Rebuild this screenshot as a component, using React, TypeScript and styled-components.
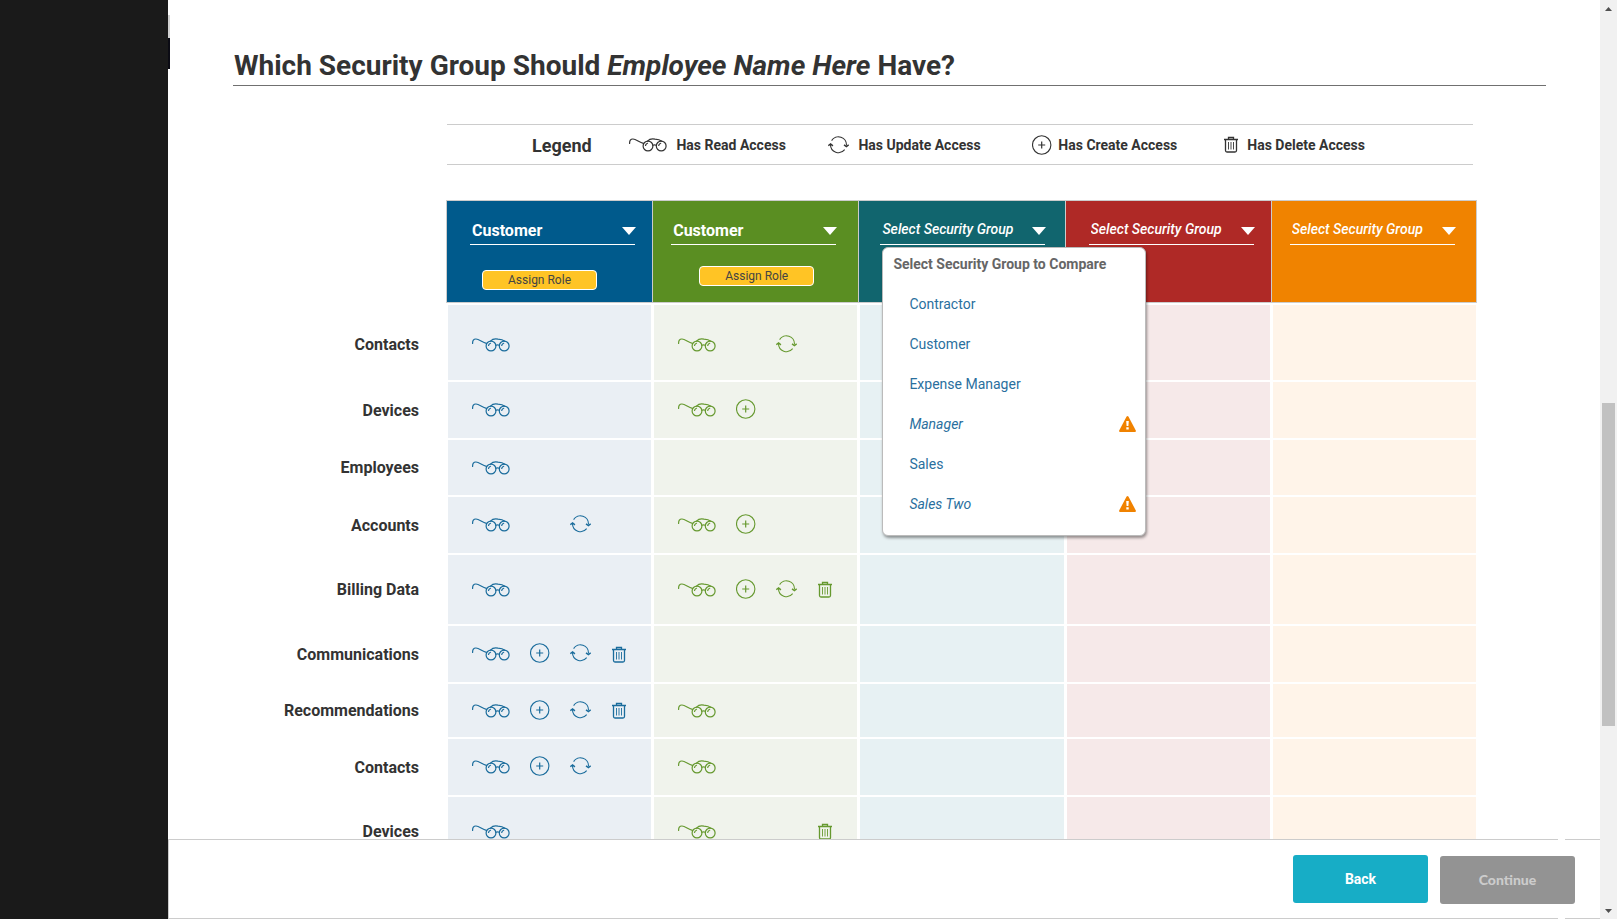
import React from "react";
import styled, { createGlobalStyle, css } from "styled-components";

const GlobalStyle = createGlobalStyle`
  *, *::before, *::after { box-sizing: border-box; }
  html, body { margin: 0; height: 100%; }
  #root { height: 100%; }
  body {
    background: #fff;
    color: #333;
    font-family: Roboto, "Liberation Sans", sans-serif;
    overflow: hidden;
  }
`;

const Shell = styled.div`
  display: flex;
  height: 100vh;
  overflow: hidden;
`;

const Sidebar = styled.nav`
  position: relative;
  flex: 0 0 168px;
  background: #1a1a1a;
`;

const SidebarMarker = styled.span`
  position: absolute;
  left: 100%;
  top: 15px;
  width: 2px;
  height: 54px;
  border-top: 23px solid #d0d0d0;
  background: #0b0b14;
`;

const Page = styled.div`
  flex: 1;
  min-width: 0;
  display: flex;
  flex-direction: column;
`;

const Content = styled.main`
  flex: 1;
  min-height: 0;
  overflow: hidden;
  padding: 44px 54px 0 65px;
`;

const Title = styled.h1`
  margin: 0;
  padding: 1px 0 0 1px;
  height: 42px;
  border-bottom: 1px solid #707070;
  font-size: 28px;
  line-height: 42px;
  font-weight: 700;
  white-space: nowrap;
`;

const Comparison = styled.section`
  padding: 38px 69px 0 0;
`;

const Legend = styled.div`
  display: grid;
  grid-template-columns: 98fr 200fr 205fr 193fr 138fr;
  align-items: center;
  height: 41px;
  margin: 0 4px 35px 214px;
  padding: 0 108px 0 85px;
  border: solid #ccc;
  border-width: 1px 0;
`;

const LegendTitle = styled.h2`
  margin: 0;
  padding-top: 2px;
  font-size: 18px;
  line-height: 24px;
  font-weight: 700;
`;

const LegendItem = styled.div<{ $tight: boolean }>`
  display: flex;
  align-items: center;
  gap: ${(p) => (p.$tight ? 6 : 9)}px;
  font-size: 14px;
  line-height: 20px;
  font-weight: 700;
  white-space: nowrap;
`;

const Matrix = styled.table`
  width: 100%;
  table-layout: fixed;
  border-collapse: separate;
  border-spacing: 0;
`;

const LabelColumn = styled.col`
  width: 213px;
`;

const GroupHeader = styled.th<{ $color: string }>`
  height: 103px;
  padding: 0;
  vertical-align: top;
  text-align: left;
  background: ${(p) => p.$color};
  border: 1px solid #ccc;
  border-right-width: 0;
  &:last-child { border-right-width: 1px; }
`;

const HeaderBody = styled.div<{ $inset: number }>`
  position: relative;
  padding: 16px 0 0 ${(p) => p.$inset}px;
`;

const Picker = styled.div`
  display: grid;
  width: 165px;
  align-items: center;
  border-bottom: 1px solid #fff;
  & > * { grid-area: 1 / 1; }
`;

const Select = styled.select<{ $placeholder: boolean }>`
  appearance: none;
  width: 100%;
  height: 27px;
  margin: 0;
  padding: 0 24px 0 2px;
  border: 0;
  background: transparent;
  color: #fff;
  font-family: inherit;
  ${(p) =>
    p.$placeholder
      ? css`font-size: 14px; font-style: italic; font-weight: 500; padding-bottom: 4px;`
      : css`font-size: 16px; font-weight: 700;`}
  option { color: #333; }
`;

const Caret = styled.svg`
  justify-self: end;
  margin-right: -1px;
  pointer-events: none;
  fill: #fff;
`;

const AssignButton = styled.button<{ $raised: boolean }>`
  display: block;
  width: 115px;
  height: 20px;
  margin: ${(p) => (p.$raised ? "21px 0 0 28px" : "25px 0 0 12px")};
  padding: 0;
  border: 1px solid #fff;
  border-radius: 4px;
  background: #ffc425;
  color: #444;
  font-family: inherit;
  font-size: 12px;
  line-height: 18px;
`;

const Menu = styled.div`
  position: absolute;
  z-index: 2;
  top: 46px;
  left: 23px;
  width: 264px;
  padding: 5px 0 11px;
  border: 1px solid #bbb;
  border-radius: 6px;
  background: #fff;
  box-shadow: 1px 2px 3px rgba(0, 0, 0, 0.4);
`;

const MenuTitle = styled.h3`
  margin: 0 0 9px;
  padding-left: 10px;
  color: #666;
  font-size: 14px;
  line-height: 22px;
  font-weight: 700;
`;

const MenuList = styled.ul`
  margin: 0;
  padding: 0;
  list-style: none;
`;

const MenuLink = styled.a<{ $flagged: boolean }>`
  display: flex;
  align-items: center;
  justify-content: space-between;
  height: 40px;
  padding: 0 9px 0 26px;
  color: #2a6f9e;
  font-size: 14px;
  font-weight: 400;
  font-style: ${(p) => (p.$flagged ? "italic" : "normal")};
  text-decoration: none;
`;

const RowLabel = styled.th`
  padding: 0 27px 0 0;
  text-align: right;
  font-size: 16px;
  line-height: 16px;
  font-weight: 700;
`;

const RowLabelText = styled.span`
  display: block;
  padding-top: 3px;
`;

const AccessCell = styled.td<{ $tint: string; $height: number }>`
  height: ${(p) => p.$height + 2}px;
  padding: 0 0 0 24px;
  border: solid #fff;
  border-width: 2px 1px 0 2px;
  background: ${(p) => p.$tint};
`;

const MatrixRow = styled.tr`
  &:first-child > ${RowLabel}, &:first-child > ${AccessCell} { padding-top: 4px; }
`;

const AccessIcons = styled.div<{ $color: string }>`
  display: grid;
  grid-template-columns: 58px 40px 42px 16px;
  align-items: center;
  height: 22px;
  color: ${(p) => p.$color};
`;

const Slot = styled.span<{ $column: number; $raised: boolean }>`
  grid-column: ${(p) => p.$column};
  grid-row: 1;
  display: flex;
  padding-bottom: ${(p) => (p.$raised ? 2 : 0)}px;
`;

const Footer = styled.footer`
  position: relative;
  flex: 0 0 80px;
  display: flex;
  justify-content: flex-end;
  gap: 12px;
  padding: 15px 25px 0 0;
  border: 1px solid #ccc;
  border-right: 0;
  background: #fff;
`;

const FooterGap = styled.span`
  position: absolute;
  top: -1px;
  bottom: -1px;
  right: 35px;
  width: 7px;
  border: solid #fff;
  border-width: 1px 0;
`;

const ActionButton = styled.button<{ $muted?: boolean }>`
  position: relative;
  z-index: 1;
  width: 135px;
  height: 48px;
  padding: 0;
  border: 0;
  border-radius: 3px;
  font-family: Roboto, sans-serif;
  font-size: 14px;
  font-weight: 700;
  background: #17adc6;
  color: #fff;
  ${(p) =>
    p.$muted &&
    css`
      margin-top: 1px;
      padding-bottom: 2px;
      background: #939393;
      color: #ccc;
      font-family: Lato, sans-serif;
      font-weight: 900;
    `}
`;

const ScrollTrack = styled.div`
  flex: 0 0 17px;
  display: grid;
  grid-template-rows: 17px 386fr 323fr 176fr 17px;
  justify-items: center;
  align-items: center;
  background: #f1f1f1;
`;

const ScrollThumb = styled.div`
  grid-row: 3;
  width: 13px;
  height: 100%;
  background: #c1c1c1;
`;

const ScrollArrow = styled.svg<{ $row: number }>`
  grid-row: ${(p) => p.$row};
  fill: #505050;
`;

type Access = "read" | "create" | "update" | "delete";

function GlassesIcon() {
  return (
    <svg width="38" height="14" viewBox="0 0 38 14" fill="none" stroke="currentColor" strokeWidth="1.200" strokeLinecap="round" aria-hidden="true">
      <path d="M.6 5.500C.5 2.600 1.600.9 4 1c3 .1 6 3.100 10.400 4.400" />
      <circle cx="19" cy="8" r="4.900" />
      <circle cx="32.200" cy="8" r="4.900" />
      <path d="M23.900 7.300q1.700-.9 3.400 0M18.500 3.100C20.500 1 23.500.7 26 1.200c2.500.1 5 .6 6.800 2M16.500 7.500q.4-1.700 2-2.200M29.700 7.500q.4-1.700 2-2.200" />
    </svg>
  );
}

function CreateIcon() {
  return (
    <svg width="20" height="20" viewBox="0 0 20 20" fill="none" stroke="currentColor" aria-hidden="true">
      <circle cx="9.700" cy="10" r="9.200" strokeWidth="1.100" />
      <path d="M9.700 6.500v7M6.200 10h7" strokeWidth="1.200" />
    </svg>
  );
}

function UpdateIcon() {
  return (
    <svg width="21" height="18" viewBox="0 0 21 18" fill="none" stroke="currentColor" aria-hidden="true">
      <path d="M3.600 4.600A8 8 0 0 1 18.400 9.500M16.700 13.700A8 8 0 0 1 2.500 8.500" strokeWidth="1.100" />
      <path d="M.3 9.700 2.600 7.900l2.300 2M16 8.900l2.400 1.700 2.300-1.700" strokeWidth="1.400" />
    </svg>
  );
}

function DeleteIcon() {
  return (
    <svg width="14" height="17" viewBox="0 0 14 17" fill="none" stroke="currentColor" aria-hidden="true">
      <path d="M0 3.500h14M4.500 3V1.500h5V3" strokeWidth="1.300" />
      <path d="M1.500 3.500v11q0 1.500 1.500 1.500h8q1.500 0 1.500-1.500v-11" strokeWidth="1.300" />
      <path d="M4.500 6v7.500M7 6v7.500M9.500 6v7.500" strokeWidth=".9" />
    </svg>
  );
}

function WarningIcon() {
  return (
    <svg width="17" height="16" viewBox="0 0 17 16" role="img" aria-label="Warning">
      <path d="M7.600.6q.9-1.200 1.800 0l7.400 13.800q.5 1.400-.9 1.600H1.100q-1.400-.2-.9-1.600z" fill="#f08200" />
      <path d="M7.200 5h2.600l-.4 5H7.600zM7.300 11.300h2.400v2.200H7.300z" fill="#fff" />
    </svg>
  );
}

const ICONS: Record<Access, { column: number; label: string; Icon: () => React.JSX.Element }> = {
  read: { column: 1, label: "Has Read Access", Icon: GlassesIcon },
  create: { column: 2, label: "Has Create Access", Icon: CreateIcon },
  update: { column: 3, label: "Has Update Access", Icon: UpdateIcon },
  delete: { column: 4, label: "Has Delete Access", Icon: DeleteIcon },
};

const LEGEND_ORDER: Access[] = ["read", "update", "create", "delete"];

const PLACEHOLDER = "Select Security Group";

const GROUPS = [
  { name: "Customer", color: "#005a8c", ink: "#1a6c9c", tint: "#eaeff4", inset: 23 },
  { name: "Customer", color: "#5a8e22", ink: "#66992f", tint: "#f0f3ec", inset: 18, raised: true },
  { color: "#11656e", ink: "#11656e", tint: "#e7f1f3", inset: 21, open: true },
  { color: "#af2926", ink: "#af2926", tint: "#f6e9e9", inset: 23 },
  { color: "#f08300", ink: "#f08300", tint: "#fff4e9", inset: 18 },
];

const ROWS: { label: string; height: number; access: Access[][] }[] = [
  { label: "Contacts", height: 75, access: [["read"], ["read", "update"]] },
  { label: "Devices", height: 56, access: [["read"], ["read", "create"]] },
  { label: "Employees", height: 55, access: [["read"], []] },
  { label: "Accounts", height: 56, access: [["read", "update"], ["read", "create"]] },
  { label: "Billing Data", height: 69, access: [["read"], ["read", "create", "update", "delete"]] },
  { label: "Communications", height: 56, access: [["read", "create", "update", "delete"], []] },
  { label: "Recommendations", height: 53, access: [["read", "create", "update", "delete"], ["read"]] },
  { label: "Contacts", height: 56, access: [["read", "create", "update"], ["read"]] },
  { label: "Devices", height: 69, access: [["read"], ["read", "delete"]] },
];

const MENU_ITEMS = [
  { name: "Contractor" },
  { name: "Customer" },
  { name: "Expense Manager" },
  { name: "Manager", flagged: true },
  { name: "Sales" },
  { name: "Sales Two", flagged: true },
];

function GroupMenu() {
  return (
    <Menu>
      <MenuTitle>Select Security Group to Compare</MenuTitle>
      <MenuList>
        {MENU_ITEMS.map((item) => (
          <li key={item.name}>
            <MenuLink href="#" $flagged={!!item.flagged}>
              {item.name}
              {item.flagged && <WarningIcon />}
            </MenuLink>
          </li>
        ))}
      </MenuList>
    </Menu>
  );
}

export default function App() {
  return (
    <>
      <GlobalStyle />
      <Shell>
        <Sidebar>
          <SidebarMarker />
        </Sidebar>
        <Page>
          <Content>
            <Title>
              Which Security Group Should <em>Employee Name Here</em> Have?
            </Title>
            <Comparison>
              <Legend>
                <LegendTitle>Legend</LegendTitle>
                {LEGEND_ORDER.map((key) => {
                  const { Icon, label } = ICONS[key];
                  return (
                    <LegendItem key={key} $tight={key === "create"}>
                      <Icon />
                      {label}
                    </LegendItem>
                  );
                })}
              </Legend>
              <Matrix>
                <colgroup>
                  <LabelColumn />
                  <col span={5} />
                </colgroup>
                <thead>
                  <tr>
                    <td />
                    {GROUPS.map((group, i) => (
                      <GroupHeader key={i} scope="col" $color={group.color}>
                        <HeaderBody $inset={group.inset}>
                          <Picker>
                            <Select
                              aria-label={`Security group ${i + 1}`}
                              $placeholder={!group.name}
                              defaultValue={group.name ?? PLACEHOLDER}
                            >
                              <option>{group.name ?? PLACEHOLDER}</option>
                            </Select>
                            <Caret width="14" height="8" viewBox="0 0 14 8" aria-hidden="true">
                              <path d="M0 0h14L7 8z" />
                            </Caret>
                          </Picker>
                          {group.name && (
                            <AssignButton type="button" $raised={!!group.raised}>
                              Assign Role
                            </AssignButton>
                          )}
                          {group.open && <GroupMenu />}
                        </HeaderBody>
                      </GroupHeader>
                    ))}
                  </tr>
                </thead>
                <tbody>
                  {ROWS.map((row, r) => (
                    <MatrixRow key={r}>
                      <RowLabel scope="row">
                        <RowLabelText>{row.label}</RowLabelText>
                      </RowLabel>
                      {GROUPS.map((group, c) => (
                        <AccessCell key={c} $tint={group.tint} $height={row.height}>
                          <AccessIcons $color={group.ink}>
                            {(row.access[c] ?? []).map((key) => {
                              const { Icon, column, label } = ICONS[key];
                              return (
                                <Slot
                                  key={key}
                                  $column={column}
                                  $raised={key === "create" || key === "update"}
                                  role="img"
                                  aria-label={label}
                                >
                                  <Icon />
                                </Slot>
                              );
                            })}
                          </AccessIcons>
                        </AccessCell>
                      ))}
                    </MatrixRow>
                  ))}
                </tbody>
              </Matrix>
            </Comparison>
          </Content>
          <Footer>
            <FooterGap />
            <ActionButton type="button">Back</ActionButton>
            <ActionButton type="button" $muted>
              Continue
            </ActionButton>
          </Footer>
        </Page>
        <ScrollTrack>
          <ScrollArrow $row={1} width="7" height="4" viewBox="0 0 7 4" aria-hidden="true">
            <path d="M0 4h7L3.500 0z" />
          </ScrollArrow>
          <ScrollThumb />
          <ScrollArrow $row={5} width="7" height="4" viewBox="0 0 7 4" aria-hidden="true">
            <path d="M0 0h7L3.500 4z" />
          </ScrollArrow>
        </ScrollTrack>
      </Shell>
    </>
  );
}
